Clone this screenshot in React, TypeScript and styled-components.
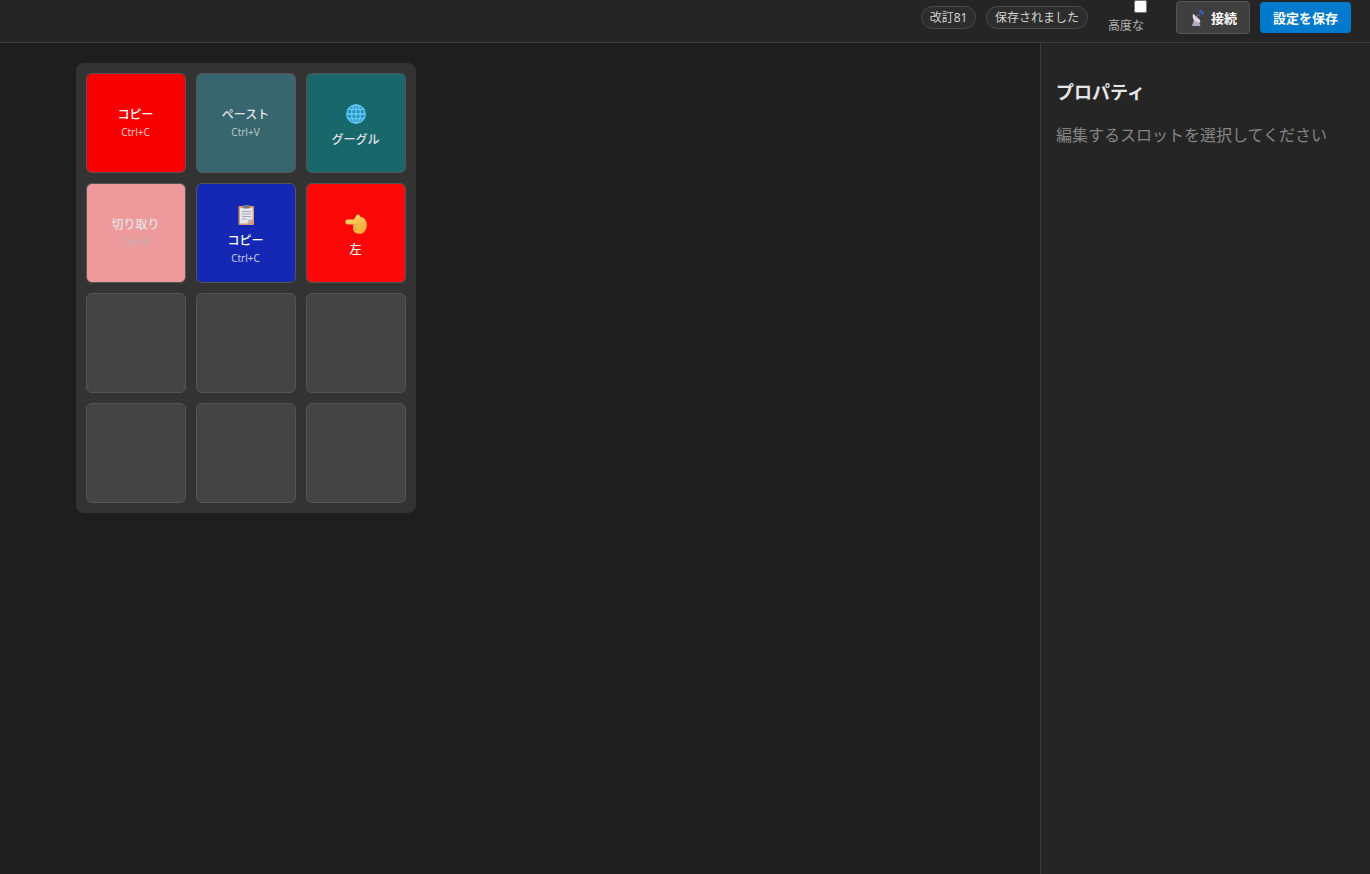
import React from "react";
import styled, { createGlobalStyle } from "styled-components";

const FONT = `"Noto Sans", "Noto Sans CJK JP", sans-serif`;

const Global = createGlobalStyle`
  html, body { margin: 0; padding: 0; height: 100%; background: #1e1e1e; }
  #root { height: 100%; }
  * { box-sizing: border-box; }
`;

const Page = styled.div`
  width: 1370px;
  height: 874px;
  display: flex;
  flex-direction: column;
  overflow: hidden;
  background: #1e1e1e;
  color: #e0e0e0;
  font-family: ${FONT};
`;

const Header = styled.header`
  height: 43px;
  flex: none;
  display: flex;
  align-items: flex-start;
  justify-content: flex-end;
  padding-right: 19px;
  background: #252526;
  border-bottom: 1px solid #3c3c3c;
`;

const Badge = styled.span<{ $ml: number; $w: number }>`
  width: ${(p) => p.$w}px;
  height: 23px;
  margin-top: 6px;
  margin-left: ${(p) => p.$ml}px;
  padding-top: 1px;
  display: flex;
  align-items: center;
  justify-content: center;
  border: 1px solid #4a4a4a;
  border-radius: 12px;
  background: #2d2d2d;
  color: #d4d4d4;
  font-size: 12px;
  line-height: 1;
`;

const Advanced = styled.label`
  width: 48px;
  margin-left: 20px;
  margin-right: 20px;
  display: flex;
  flex-direction: column;
  align-items: flex-start;
  color: #b4b4b4;
  font-size: 12px;
  line-height: 16px;
`;

const Check = styled.input`
  width: 13px;
  height: 13px;
  margin: 0 0 5px 26px;
`;

const ConnectButton = styled.button`
  width: 74px;
  height: 33px;
  margin-top: 1px;
  margin-right: 10px;
  padding: 0;
  display: flex;
  align-items: center;
  justify-content: center;
  gap: 4px;
  border: 1px solid #555;
  border-radius: 4px;
  background: #3f3f3f;
  color: #fff;
  font-family: ${FONT};
  font-size: 13px;
  font-weight: 700;
`;

const SaveButton = styled.button`
  width: 91px;
  height: 31px;
  margin-top: 2px;
  padding: 0;
  border: none;
  border-radius: 4px;
  background: #007acc;
  color: #fff;
  font-family: ${FONT};
  font-size: 13px;
  font-weight: 700;
`;

const Body = styled.div`
  flex: 1;
  min-height: 0;
  display: flex;
`;

const Canvas = styled.main`
  flex: 1;
  padding: 20px 0 0 76px;
`;

const Panel = styled.div`
  width: 340px;
  display: grid;
  grid-template-columns: repeat(3, 100px);
  grid-auto-rows: 100px;
  gap: 10px;
  padding: 10px;
  border-radius: 8px;
  background: #333;
`;

const Slot = styled.div<{ $bg?: string; $fade?: number; $lift?: boolean }>`
  display: flex;
  flex-direction: column;
  align-items: center;
  justify-content: center;
  padding-right: 1px;
  padding-bottom: ${(p) => (p.$lift ? 2 : 0)}px;
  border: 1px solid #555;
  border-radius: 6px;
  background: ${(p) => p.$bg ?? "#444"};
  color: ${(p) => (p.$fade ? "#dcdcdc" : "#fff")};
`;

const Icon = styled.span`
  height: 20px;
  margin-top: 6px;
  margin-bottom: 7px;
  display: flex;
`;

const Label = styled.span<{ $dim?: boolean }>`
  font-size: 12px;
  font-weight: 500;
  line-height: 17px;
  color: ${(p) => (p.$dim ? "#e2e2e2" : "inherit")};
`;

const Shortcut = styled.span<{ $color?: string }>`
  margin-top: 2px;
  margin-bottom: 1px;
  font-size: 10px;
  line-height: 14px;
  color: ${(p) => p.$color ?? "#d4d4d4"};
`;

const Sidebar = styled.aside`
  width: 330px;
  flex: none;
  padding: 36px 15px 0;
  background: #252526;
  border-left: 1px solid #3c3c3c;
`;

const Title = styled.h2`
  margin: 0;
  color: #e6e6e6;
  font-size: 18px;
  font-weight: 700;
  line-height: 26px;
`;

const Hint = styled.p`
  margin: 18px 0 0;
  color: #858585;
  font-size: 16px;
  line-height: 24px;
`;

const Antenna = () => (
  <svg width="18" height="18" viewBox="0 0 18 18" fill="none">
    <path d="M3 17 L5 10.5 L10 12.5 L11.5 17 Z" fill="#b5a6c2" />
    <path d="M4.2 4.8 C2.4 9.4 5.6 14 11.4 13.6 L11 11 Z" fill="#e0d8e6" />
    <path d="M6.5 8.5 L11 5" stroke="#8f8a96" strokeWidth="1" />
    <path d="M10.5 1.5 C12.8 2 14 3.4 14.4 5.6" stroke="#3b63c9" strokeWidth="1.5" />
    <circle cx="11.2" cy="4.8" r="1.4" fill="#2f56b4" />
  </svg>
);

const Globe = () => (
  <svg width="20" height="20" viewBox="0 0 20 20" fill="none">
    <circle cx="10" cy="10" r="9.4" fill="#2b93b8" />
    <g stroke="#62ccfb" strokeWidth="1.3">
      <circle cx="10" cy="10" r="9.2" />
      <ellipse cx="10" cy="10" rx="4.4" ry="9.2" />
      <path d="M10 .8V19.2M.8 10H19.2M2.4 5.4H17.6M2.4 14.6H17.6" />
    </g>
  </svg>
);

const Clipboard = () => (
  <svg width="20" height="20" viewBox="0 0 20 20">
    <rect x="2.5" y="1" width="15.5" height="19" rx="1" fill="#d99a70" />
    <path d="M4 3 H16.6 V14.5 L11.8 18.6 H4 Z" fill="#e6e5f0" />
    <path d="M11.8 18.6 L16.6 14.5 H11.8 Z" fill="#b9b4c6" />
    <rect x="7" y="0" width="6.5" height="3.4" rx=".6" fill="#7b757f" />
    <path d="M6 6.5H15M6 9H15M6 11.5H15M6 14H10.5" stroke="#a9a6b4" strokeWidth="1" />
  </svg>
);

const PointLeft = () => (
  <svg width="22" height="20" viewBox="0 0 22 20">
    <defs>
      <linearGradient id="hand" x1="0" y1="0" x2="1" y2="1">
        <stop offset="0" stopColor="#ffdf6e" />
        <stop offset="1" stopColor="#f3a52f" />
      </linearGradient>
    </defs>
    <path d="M.4 8 C.4 6.4 1.6 5.6 3 5.6 L9 5.4 L11.4 1.2 C12.2 .1 14.4 .2 14.9 1.8 L15.2 2.8 C19.2 3.4 21.8 6.8 21.8 11 C21.8 16.2 18.8 19.8 14.6 19.8 C11.2 19.8 8.8 18.4 8.4 16 C7.8 15 7.8 14 8.4 13 L8 10.6 L3 10.4 C1.6 10.4 .4 9.6 .4 8 Z" fill="url(#hand)" />
    <path d="M8 10.6 C9.6 10.8 11 10.7 12 10.3 M8.4 13.2 C10 13.5 11.2 13.4 12.2 13 M8.7 16 C10 16.2 11 16.1 12 15.8" stroke="#dd8c2c" strokeWidth=".8" fill="none" />
  </svg>
);

const slots: {
  bg?: string;
  fade?: number;
  icon?: React.ReactNode;
  label?: string;
  short?: string;
  shortColor?: string;
  dim?: boolean;
}[] = [
  { bg: "#f80000", label: "コピー", short: "Ctrl+C", shortColor: "#f0c8c8" },
  { bg: "#37666f", label: "ペースト", short: "Ctrl+V", shortColor: "#b8c6c9", dim: true },
  { bg: "#18676b", icon: <Globe />, label: "グーグル", dim: true },
  { bg: "#ee9a9c", fade: 1, label: "切り取り", short: "Ctrl+X", shortColor: "#c0b0b2", dim: true },
  { bg: "#1528b4", icon: <Clipboard />, label: "コピー", short: "Ctrl+C", shortColor: "#c8cce4" },
  { bg: "#fc0808", icon: <PointLeft />, label: "左" },
  {}, {}, {}, {}, {}, {},
];

export default function App() {
  return (
    <Page>
      <Global />
      <Header>
        <Badge $ml={0} $w={55}>改訂81</Badge>
        <Badge $ml={10} $w={102}>保存されました</Badge>
        <Advanced>
          <Check type="checkbox" />
          高度な
        </Advanced>
        <ConnectButton>
          <Antenna />
          接続
        </ConnectButton>
        <SaveButton>設定を保存</SaveButton>
      </Header>
      <Body>
        <Canvas>
          <Panel>
            {slots.map((s, i) => (
              <Slot key={i} $bg={s.bg} $fade={s.fade} $lift={Boolean(s.icon && s.short)}>
                {s.icon && <Icon>{s.icon}</Icon>}
                {s.label && <Label $dim={s.dim}>{s.label}</Label>}
                {s.short && <Shortcut $color={s.shortColor}>{s.short}</Shortcut>}
              </Slot>
            ))}
          </Panel>
        </Canvas>
        <Sidebar>
          <Title>プロパティ</Title>
          <Hint>編集するスロットを選択してください</Hint>
        </Sidebar>
      </Body>
    </Page>
  );
}
